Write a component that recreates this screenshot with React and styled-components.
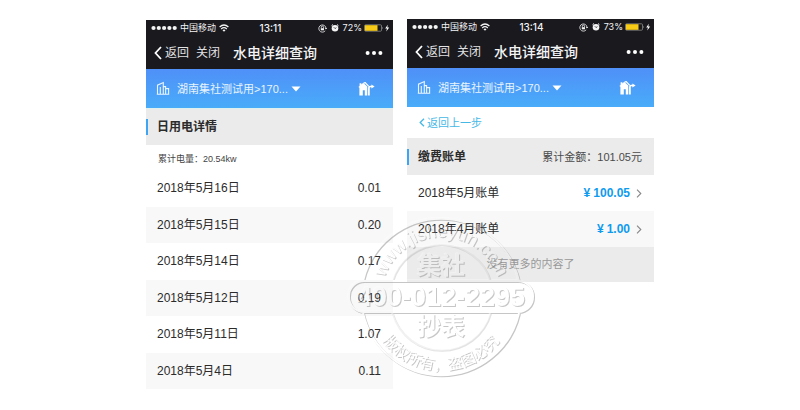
import React from "react";
import styled, { createGlobalStyle } from "styled-components";

const GlobalStyle = createGlobalStyle`
  *, *::before, *::after { box-sizing: border-box; }
  body {
    margin: 0;
    background: #fff;
    color: #2b2b2b;
    font: 12px/16px "Liberation Sans", "Noto Sans CJK SC", sans-serif;
  }
  button {
    border: 0;
    padding: 0;
    background: none;
    color: inherit;
    font: inherit;
    cursor: pointer;
  }
  svg { display: block; flex: none; }
`;

const Stage = styled.main`
  position: relative;
  display: grid;
  grid-template-columns: 1fr 1fr;
  align-items: start;
  gap: 14px;
  padding: 19px 146px 20px;
`;

const Phone = styled.section`
  min-width: 0;
  margin-top: ${(p) => (p.$lowered ? "1px" : "0")};
`;

const DarkTop = styled.header`
  background: #19191e;
  color: #f4f4f5;
`;

const StatusBar = styled.div`
  display: grid;
  grid-template-columns: 1fr auto 1fr;
  align-items: center;
  height: 16px;
  padding: 0 3px 0 5px;
  font: 9px/16px Inter, "Noto Sans CJK SC", sans-serif;
`;

const Carrier = styled.div`
  display: flex;
  align-items: center;
  gap: 3px;
  white-space: nowrap;
`;

const Clock = styled.time`
  font-size: 10px;
  font-weight: 500;
`;

const Indicators = styled.div`
  display: flex;
  align-items: center;
  justify-content: flex-end;
  gap: 4px;
`;

const Charge = styled.span`
  display: flex;
  align-items: center;
  gap: 2px;
`;

const NavBar = styled.nav`
  display: flex;
  align-items: center;
  height: 33px;
  padding: 0 10px 0 8px;
`;

const NavButton = styled.button`
  display: flex;
  align-items: center;
  gap: 3px;
  margin-right: 7px;
  color: #e2e2e4;
  white-space: nowrap;
`;

const Title = styled.h1`
  flex: 1;
  margin: 0 0 0 6px;
  font-size: 14px;
  line-height: 20px;
  font-weight: 500;
  white-space: nowrap;
`;

const SiteBar = styled.div`
  display: flex;
  align-items: center;
  justify-content: space-between;
  height: 39px;
  padding: 0 17px 0 10px;
  background: linear-gradient(#4f90f8, #49acf9);
  color: #e9f4ff;
`;

const SitePicker = styled.button`
  display: flex;
  align-items: center;
  font-size: 11px;
  white-space: nowrap;
`;

const SiteName = styled.span`
  margin: 0 3px 0 7px;
`;

const SectionHead = styled.div`
  display: flex;
  align-items: center;
  justify-content: space-between;
  height: 37px;
  border-top: ${(p) => (p.$lined ? "1px solid #dff1ee" : "0")};
  padding-right: 12px;
  background: #ebebeb;
`;

const SectionTitle = styled.h2`
  margin: 0;
  padding-left: 9px;
  border-left: 2px solid #3ea5f5;
  font-size: 12px;
  line-height: 16px;
  font-weight: 700;
`;

const SectionTotal = styled.span`
  color: #4a4a4a;
  font-size: 11px;
`;

const UsageTotal = styled.p`
  height: 25px;
  margin: 0;
  padding-left: 12px;
  color: #444;
  font-size: 9px;
  line-height: 28px;
`;

const List = styled.table`
  width: 100%;
  height: ${(p) => p.$height}px;
  border-collapse: collapse;
`;

const Row = styled.tr`
  &:nth-child(even) { background: #f8f8f8; }
`;

const Name = styled.th`
  padding: 0 0 0 11px;
  font-weight: 400;
  text-align: left;
`;

const Value = styled.td`
  padding: 0 12px 0 0;
  text-align: right;
`;

const BillLink = styled.a`
  display: flex;
  align-items: center;
  justify-content: flex-end;
  gap: 3px;
  color: #0f9bee;
  font-weight: 700;
  text-decoration: none;
  svg { margin-left: 3px; }
`;

const BackRow = styled.div`
  display: flex;
  align-items: center;
  height: 31px;
  padding-left: 12px;
`;

const BackLink = styled.a`
  display: flex;
  align-items: center;
  gap: 2px;
  color: #46b8e6;
  font-size: 11px;
  text-decoration: none;
`;

const ListEnd = styled.p`
  margin: 0;
  background: #ebebeb;
  color: #999;
  font-size: 11px;
  line-height: 35px;
  text-align: center;
`;

const Watermark = styled.svg`
  position: absolute;
  top: 212px;
  left: calc(50% - 56px);
  pointer-events: none;
  font-family: "Liberation Sans", "Noto Sans CJK SC", sans-serif;
`;

const SignalDots = () => (
  <svg width="26" height="6" viewBox="0 0 26 6" fill="currentColor" aria-hidden="true">
    {[2.5, 7.8, 13.1, 18.4, 23.7].map((x) => <circle key={x} cx={x} cy="3" r="2.1" />)}
  </svg>
);

const WifiIcon = () => (
  <svg width="10" height="8" viewBox="0 0 10 8" fill="none" stroke="currentColor" strokeWidth="1.3" aria-hidden="true">
    <path d="M.6 3Q5-1 9.4 3M2.2 4.9Q5 2.4 7.8 4.9" />
    <path d="M3.5 6.2Q5 5 6.5 6.2L5 7.8Z" fill="currentColor" stroke="none" />
  </svg>
);

const LockIcon = () => (
  <svg width="9" height="9" viewBox="0 0 9 9" fill="none" stroke="currentColor" strokeWidth=".8" aria-hidden="true">
    <path d="M7.2 6.8A3.6 3.6 0 1 1 8 4.5M6.9 4 8 5.1 8.9 4" />
    <path d="M3.3 4.2V3.2a1.1 1.1 0 0 1 2.2 0v1" />
    <rect x="2.8" y="4.2" width="3.2" height="2.1" fill="currentColor" stroke="none" />
  </svg>
);

const AlarmIcon = () => (
  <svg width="8" height="8" viewBox="0 0 8 8" aria-hidden="true">
    <circle cx="4" cy="4.2" r="3.3" fill="currentColor" />
    <path d="M.5 1.8 2 .5M7.5 1.8 6 .5" stroke="currentColor" strokeWidth="1" />
    <path d="M4 4.6 2.8 3.2M4 4.6 5.4 3.6" stroke="#19191e" strokeWidth=".7" />
  </svg>
);

const BatteryIcon = () => (
  <svg width="26" height="8" viewBox="0 0 26 8" aria-hidden="true">
    <rect x=".5" y=".8" width="17" height="6.4" rx="1" fill="none" stroke="#9a9a94" strokeWidth=".7" />
    <rect x="1" y="1.2" width="12.5" height="5.6" fill="#f8cb16" />
    <path d="M18.3 2.8q1.2 1.2 0 2.4z" fill="#bbb" />
    <path d="M23.8.8 21.2 4.4h1.8L22.2 7.4 25.2 3.6h-1.9z" fill="#fff" />
  </svg>
);

const BackIcon = () => (
  <svg width="8" height="14" viewBox="0 0 8 14" fill="none" stroke="#fff" strokeWidth="1.8" aria-hidden="true">
    <path d="M7 1 1.5 7 7 13" />
  </svg>
);

const MoreIcon = () => (
  <svg width="18" height="6" viewBox="0 0 18 6" fill="#fff" aria-hidden="true">
    <circle cx="2.6" cy="3" r="2" />
    <circle cx="9" cy="3" r="2" />
    <circle cx="15.4" cy="3" r="2" />
  </svg>
);

const BuildingIcon = () => (
  <svg width="14" height="15" viewBox="0 0 14 15" fill="none" stroke="currentColor" strokeWidth="1.1" aria-hidden="true">
    <path d="M1.5 13V4.2L7.3 1.5V13M7.3 5.6H9.6V13M9.6 7.6H12.6V13M.8 13.3H13.2M4.3 13V6" />
  </svg>
);

const HomeSwitchIcon = () => (
  <svg width="18" height="14" viewBox="0 0 18 14" aria-hidden="true">
    <path d="M.4 5.1 1.6 4V1.2H3.4V2.4L5.2.8 9.3 4.5V13.5H6.8V8.3H4.8V13.5H1.4V5.8Z" fill="#fff" />
    <path d="M5.6 1 7.2.6 10.8 4.4" fill="none" stroke="#fff" strokeWidth="1.2" />
    <path d="M10.9 13.5V5.7Q10.9 4.5 12.1 4.5H14" fill="none" stroke="#fff" strokeWidth="1.7" />
    <path d="M13.4 2.4 16.6 4.5 13.4 6.6Z" fill="#fff" />
  </svg>
);

const CaretIcon = () => (
  <svg width="10" height="6" viewBox="0 0 10 6" fill="#fff" aria-hidden="true">
    <path d="M.5.5h9L5 5.5z" />
  </svg>
);

const SmallBackIcon = () => (
  <svg width="6" height="9" viewBox="0 0 6 9" fill="none" stroke="currentColor" strokeWidth="1.3" aria-hidden="true">
    <path d="M5 .8 1.2 4.5 5 8.2" />
  </svg>
);

const ChevronIcon = () => (
  <svg width="6" height="9" viewBox="0 0 6 9" fill="none" stroke="#888" strokeWidth="1.1" aria-hidden="true">
    <path d="M1 .7 4.8 4.5 1 8.3" />
  </svg>
);

const PhoneTop = ({ time, battery }) => (
  <>
    <DarkTop>
      <StatusBar>
        <Carrier><SignalDots />中国移动<WifiIcon /></Carrier>
        <Clock>{time}</Clock>
        <Indicators><LockIcon /><AlarmIcon /><Charge>{battery}<BatteryIcon /></Charge></Indicators>
      </StatusBar>
      <NavBar>
        <NavButton type="button"><BackIcon />返回</NavButton>
        <NavButton type="button">关闭</NavButton>
        <Title>水电详细查询</Title>
        <button type="button" aria-label="更多"><MoreIcon /></button>
      </NavBar>
    </DarkTop>
    <SiteBar>
      <SitePicker type="button">
        <BuildingIcon />
        <SiteName>湖南集社测试用&gt;170...</SiteName>
        <CaretIcon />
      </SitePicker>
      <button type="button" aria-label="切换房间"><HomeSwitchIcon /></button>
    </SiteBar>
  </>
);

const usage = [
  ["2018年5月16日", "0.01"],
  ["2018年5月15日", "0.20"],
  ["2018年5月14日", "0.17"],
  ["2018年5月12日", "0.19"],
  ["2018年5月11日", "1.07"],
  ["2018年5月4日", "0.11"],
];

const bills = [
  ["2018年5月账单", "100.05"],
  ["2018年4月账单", "1.00"],
];

const Stamp = () => (
  <Watermark width="194" height="170" viewBox="-97 -85 194 170" textAnchor="middle">
    <defs>
      <filter id="emboss" x="-97" y="-85" width="194" height="170" filterUnits="userSpaceOnUse" colorInterpolationFilters="sRGB">
        <feOffset in="SourceAlpha" dx="1" dy="1" result="low" />
        <feComposite in="low" in2="SourceAlpha" operator="out" result="lowEdge" />
        <feGaussianBlur in="lowEdge" stdDeviation=".4" result="lowSoft" />
        <feFlood floodColor="#777" floodOpacity=".42" />
        <feComposite in2="lowSoft" operator="in" result="shade" />
        <feOffset in="SourceAlpha" dx="-1" dy="-1" result="high" />
        <feComposite in="high" in2="SourceAlpha" operator="out" result="highEdge" />
        <feFlood floodColor="#fff" floodOpacity=".3" />
        <feComposite in2="highEdge" operator="in" result="light" />
        <feFlood floodColor="#fff" floodOpacity=".12" />
        <feComposite in2="SourceAlpha" operator="in" result="face" />
        <feMerge>
          <feMergeNode in="face" />
          <feMergeNode in="light" />
          <feMergeNode in="shade" />
        </feMerge>
      </filter>
      <path id="upperArc" d="M-60 0A60 60 0 0 1 60 0" />
      <path id="lowerArc" d="M-73 0A73 73 0 0 0 73 0" />
    </defs>
    <g filter="url(#emboss)">
      <g fill="none" stroke="#000" strokeWidth="2">
        <path d="M-78-16A80 80 0 0 1 78-16M-78 16A80 80 0 0 0 78 16" />
        <path d="M-49-16A51 51 0 0 1 49-16M-49 16A51 51 0 0 0 49 16" strokeOpacity=".5" />
        <rect x="-92" y="-16" width="184" height="31" rx="15" />
      </g>
      <text fontSize="18"><textPath href="#upperArc" startOffset="50%">www.jisheyun.com</textPath></text>
      <text y="-23" fontSize="24" fontWeight="700">集社</text>
      <text y="9" fontSize="27" fontWeight="700">400-012-2295</text>
      <text y="38" fontSize="24" fontWeight="700">抄表</text>
      <text fontSize="15"><textPath href="#lowerArc" startOffset="50%">版权所有，盗图必究</textPath></text>
    </g>
  </Watermark>
);

export default function App() {
  return (
    <>
      <GlobalStyle />
      <Stage>
        <Phone $lowered>
          <PhoneTop time="13:11" battery="72%" />
          <SectionHead $lined>
            <SectionTitle>日用电详情</SectionTitle>
          </SectionHead>
          <UsageTotal>累计电量：20.54kw</UsageTotal>
          <List $height={219}>
            <tbody>
              {usage.map(([day, amount]) => (
                <Row key={day}><Name scope="row">{day}</Name><Value>{amount}</Value></Row>
              ))}
            </tbody>
          </List>
        </Phone>
        <Phone>
          <PhoneTop time="13:14" battery="73%" />
          <BackRow><BackLink href="#back"><SmallBackIcon />返回上一步</BackLink></BackRow>
          <SectionHead>
            <SectionTitle>缴费账单</SectionTitle>
            <SectionTotal>累计金额：101.05元</SectionTotal>
          </SectionHead>
          <List $height={72}>
            <tbody>
              {bills.map(([month, amount]) => (
                <Row key={month}>
                  <Name scope="row">{month}</Name>
                  <Value>
                    <BillLink href="#bill"><span>¥</span><span>{amount}</span><ChevronIcon /></BillLink>
                  </Value>
                </Row>
              ))}
            </tbody>
          </List>
          <ListEnd>没有更多的内容了</ListEnd>
        </Phone>
        <Stamp />
      </Stage>
    </>
  );
}
